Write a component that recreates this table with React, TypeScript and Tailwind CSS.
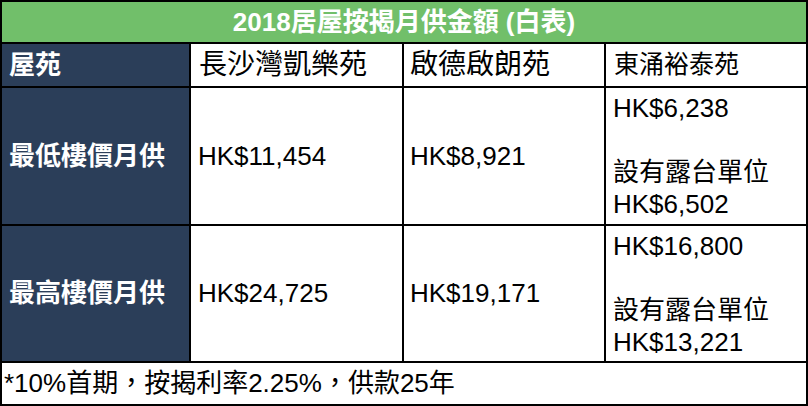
import React from 'react';

interface Row {
  label: string;
  cheung: string;
  kai: string;
  tung: string[];
}

const rows: Row[] = [
  {
    label: '最低樓價月供',
    cheung: 'HK$11,454',
    kai: 'HK$8,921',
    tung: ['HK$6,238', '', '設有露台單位', 'HK$6,502'],
  },
  {
    label: '最高樓價月供',
    cheung: 'HK$24,725',
    kai: 'HK$19,171',
    tung: ['HK$16,800', '', '設有露台單位', 'HK$13,221'],
  },
];

const font = "font-['Liberation_Sans','Noto_Sans_CJK_TC',sans-serif]";

const App: React.FC = () => {
  return (
    <div className={`w-[808px] h-[406px] bg-white ${font}`}>
      <div className="grid grid-cols-[187px_211px_200px_200px] grid-rows-[40px_42px_136px_135px_41px] gap-[2px] p-[2px] bg-black w-[808px] h-[406px]">
        {/* title */}
        <div className="col-span-4 bg-[#71bf6a] flex items-center justify-center text-white font-bold text-[26px] leading-none">
          2018居屋按揭月供金額 (白表)
        </div>

        {/* column heads */}
        <div className="bg-[#2b3e59] text-white font-bold text-[26px] flex items-center pl-[7px]">屋苑</div>
        <div className="bg-white text-black text-[28px] flex items-center pl-[8px]">長沙灣凱樂苑</div>
        <div className="bg-white text-black text-[28px] flex items-center pl-[6px]">啟德啟朗苑</div>
        <div className="bg-white text-black text-[25px] flex items-center pl-[8px]">東涌裕泰苑</div>

        {/* price rows */}
        {rows.map((row) => (
          <React.Fragment key={row.label}>
            <div className="bg-[#2b3e59] text-white font-bold text-[26px] flex items-center pl-[7px]">
              {row.label}
            </div>
            <div className="bg-white text-black text-[26px] flex items-center pl-[7px]">{row.cheung}</div>
            <div className="bg-white text-black text-[26px] flex items-center pl-[6px]">{row.kai}</div>
            <div className="bg-white text-black text-[26px] flex flex-col justify-center pl-[7px] leading-[32px]">
              {row.tung.map((line, i) => (
                <div key={i} className="h-[32px]">{line}</div>
              ))}
            </div>
          </React.Fragment>
        ))}

        {/* footnote */}
        <div className="col-span-4 bg-white text-black text-[26px] flex items-center pl-[2px]">
          *10%首期，按揭利率2.25%，供款25年
        </div>
      </div>
    </div>
  );
};

export default App;
